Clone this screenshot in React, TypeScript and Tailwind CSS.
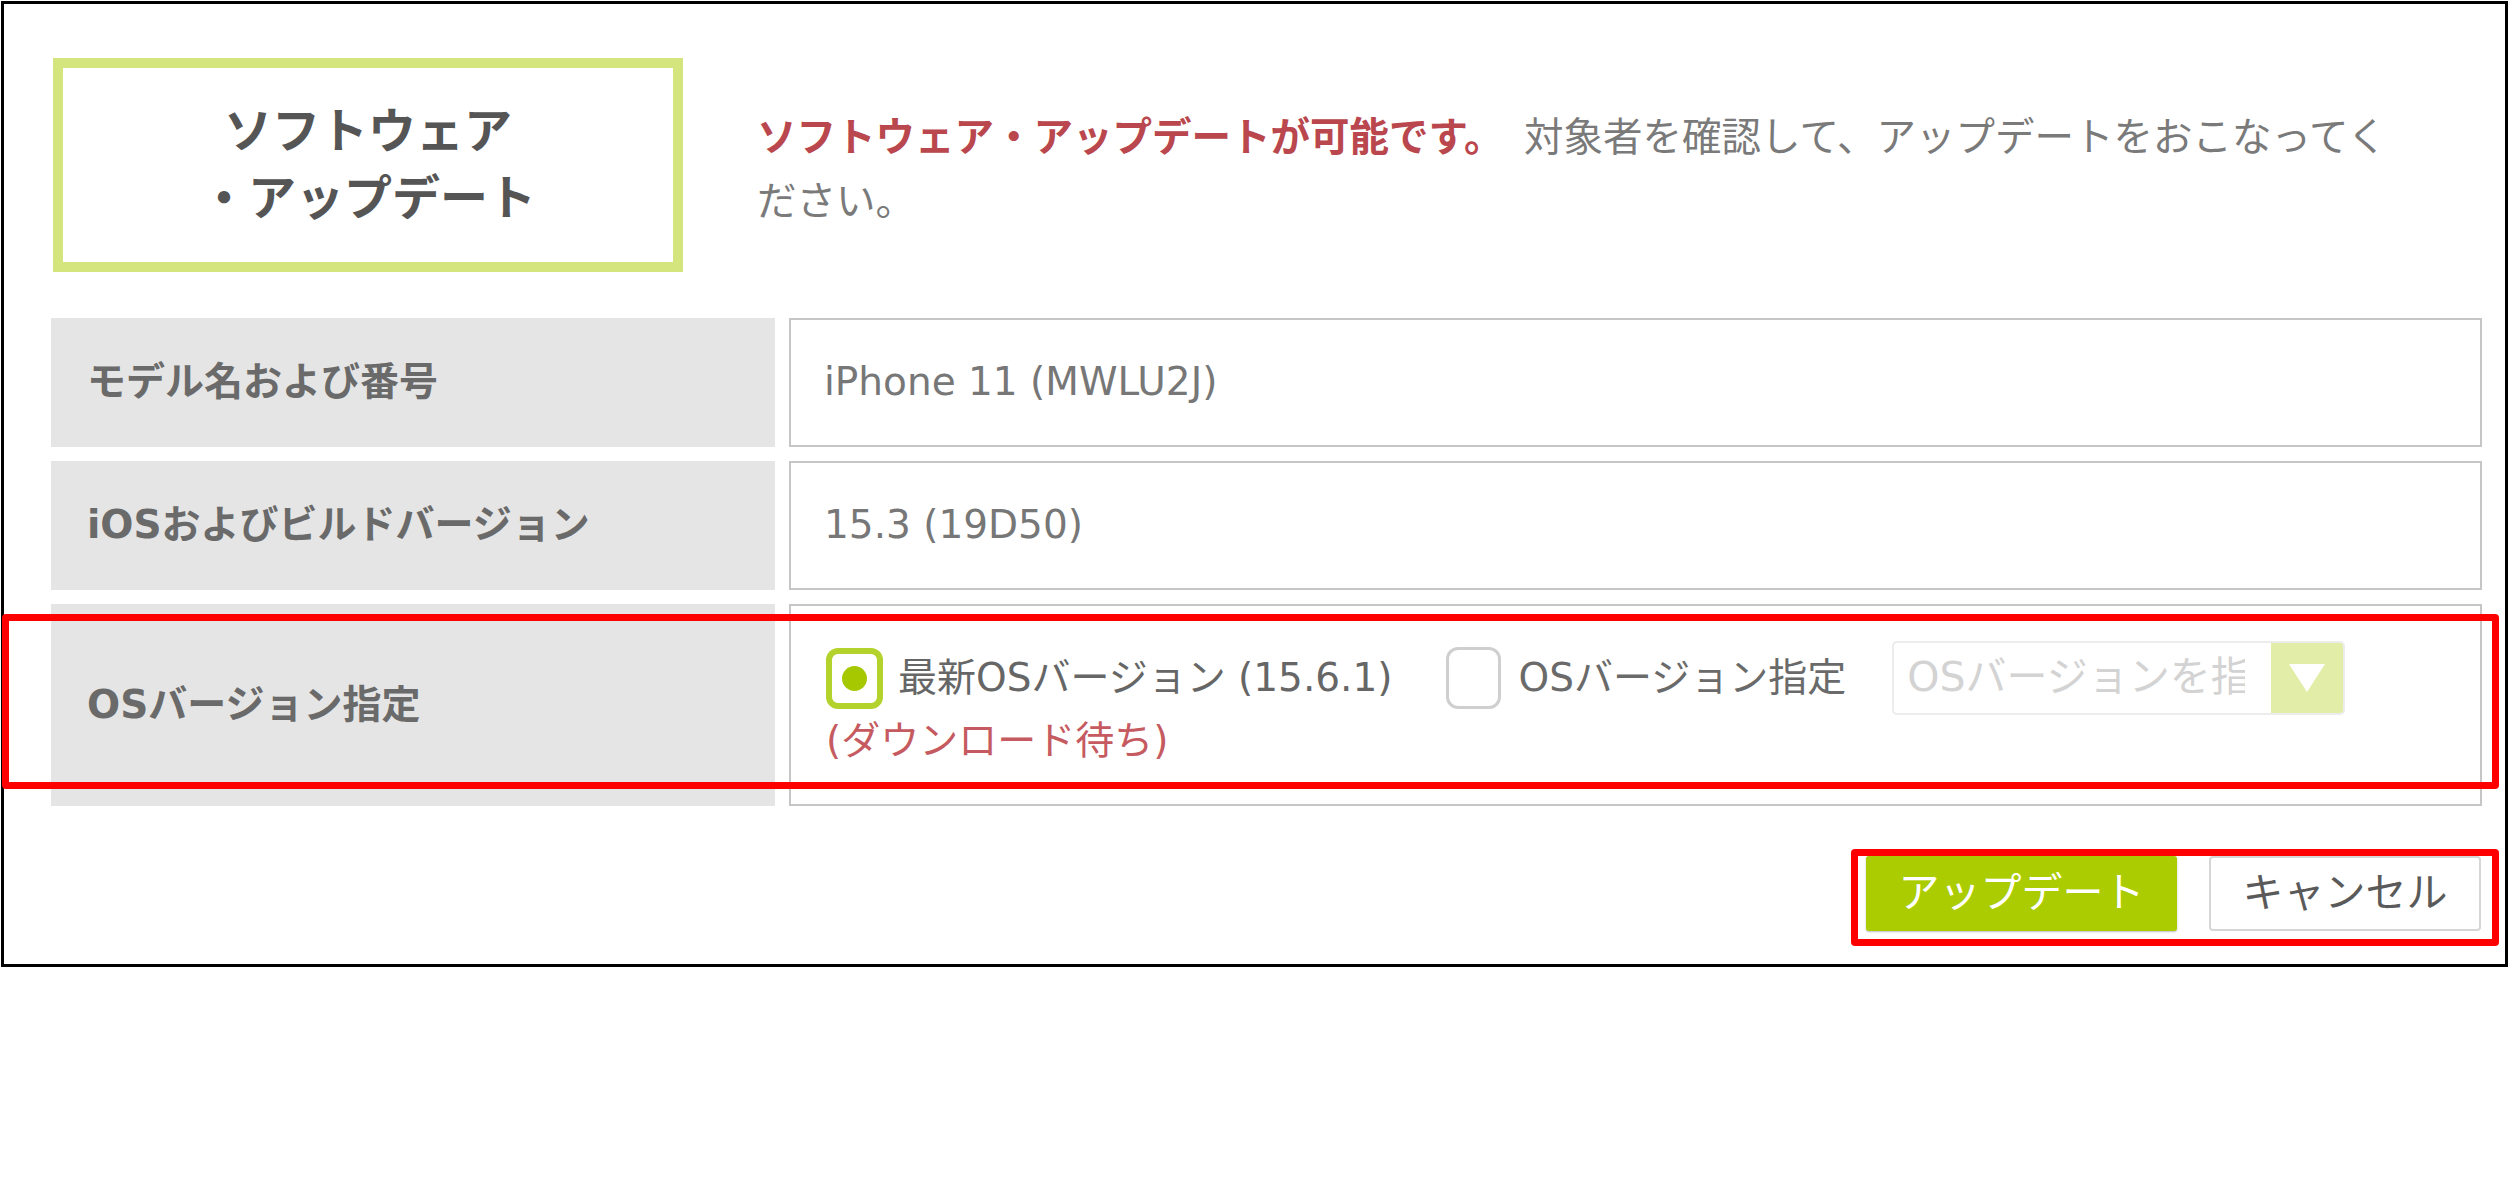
import React from 'react'

const font = { fontFamily: '"DejaVu Sans", "Noto Sans CJK JP", sans-serif' }

const InfoRow = ({ label, value }: { label: string; value: string }) => {
    return (
        <div className="flex gap-[14px] h-[129px]">
            <div className="w-[724px] bg-[#e5e5e5] pl-[36px] flex items-center text-[39px] font-bold text-[#6a6a6a]">
                {label}
            </div>
            <div className="flex-1 border-2 border-[#c6c6c6] pl-[33px] flex items-center text-[39px] text-[#777]">
                {value}
            </div>
        </div>
    )
}

const App = () => {
    return (
        <div className="relative w-[2509px] h-[1180px] bg-white" style={font}>
            <div className="ml-[1px] mt-[1px] w-[2507px] h-[966px] border-[3px] border-black pt-[54px] pl-[47px] pr-[23px]">
                {/* header */}
                <div className="flex items-center">
                    <div className="ml-[2px] w-[630px] h-[214px] border-[10px] border-[#d5e57d] flex flex-col items-center justify-center text-[48px] leading-[67px] font-bold text-[#555]">
                        <span>ソフトウェア</span>
                        <span>・アップデート</span>
                    </div>
                    <p className="ml-[74px] mt-[8px] w-[1650px] text-[39.5px] leading-[64px] text-[#7a7a7a]">
                        <span className="font-bold text-[#b9474d]">ソフトウェア・アップデートが可能です。</span>
                        <span className="ml-[8px]"> 対象者を確認して、アップデートをおこなってください。</span>
                    </p>
                </div>

                {/* table */}
                <div className="mt-[46px] flex flex-col gap-[14px]">
                    <InfoRow label="モデル名および番号" value="iPhone 11 (MWLU2J)" />
                    <InfoRow label="iOSおよびビルドバージョン" value="15.3 (19D50)" />
                    <div className="flex gap-[14px] h-[202px]">
                        <div className="w-[724px] bg-[#e5e5e5] pl-[36px] flex items-center text-[39px] font-bold text-[#6a6a6a]">
                            OSバージョン指定
                        </div>
                        <div className="flex-1 border-2 border-[#c6c6c6] pt-[41px] pl-[35px] text-[39px]">
                            <div className="flex items-center h-[62px]">
                                <div className="w-[57px] h-[61px] rounded-[12px] border-[6px] border-[#b3d32c] flex items-center justify-center">
                                    <div className="w-[25px] h-[25px] rounded-full bg-[#a6c800]" />
                                </div>
                                <span className="ml-[15px] text-[#666]">最新OSバージョン (15.6.1)</span>
                                <div className="ml-[53px] w-[55px] h-[62px] rounded-[12px] border-[3px] border-[#cfcfcf]" />
                                <span className="ml-[18px] text-[#6a6a6a]">OSバージョン指定</span>
                                <div className="ml-[46px] w-[453px] h-[74px] rounded-[5px] border-2 border-[#ececec] flex overflow-hidden">
                                    <div className="flex-1 pl-[13px] pr-[26px] flex items-center min-w-0">
                                        <div className="overflow-hidden whitespace-nowrap text-[41px] text-[#d3d3d3]">
                                            OSバージョンを指定
                                        </div>
                                    </div>
                                    <div className="w-[72px] bg-[#e2eda7] flex items-center justify-center">
                                        <svg width="36" height="28" viewBox="0 0 36 28">
                                            <path d="M0 0 H36 L18 28 Z" fill="#fff" />
                                        </svg>
                                    </div>
                                </div>
                            </div>
                            <div className="leading-[64px] text-[#c55a60]">(ダウンロード待ち)</div>
                        </div>
                    </div>
                </div>

                {/* buttons */}
                <div className="mt-[50px] flex justify-end gap-[32px] pr-[1px]">
                    <button className="w-[311px] h-[75px] rounded-[3px] bg-[#abcc00] text-white text-[41px] shadow-[0_1px_2px_rgba(0,0,0,0.25)]">
                        アップデート
                    </button>
                    <button className="w-[272px] h-[75px] rounded-[4px] border-2 border-[#d6d6d6] bg-white text-[#5a5a5a] text-[41px]">
                        キャンセル
                    </button>
                </div>
            </div>

            {/* red annotation frames */}
            <div className="absolute left-[2px] top-[613px] w-[2497px] h-[175px] border-[7px] border-[#ff0000] rounded-[4px]" />
            <div className="absolute left-[1851px] top-[848px] w-[648px] h-[97px] border-[7px] border-[#ff0000] rounded-[4px]" />
        </div>
    )
}

export default App
